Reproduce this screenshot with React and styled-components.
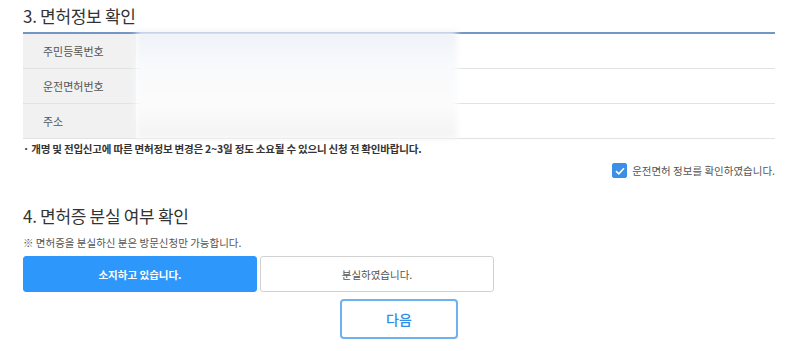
import React, { useState } from 'react'
import styled, { createGlobalStyle } from 'styled-components'

const GlobalStyle = createGlobalStyle`
  body {
    margin: 0;
    background: #fff;
    font-family: 'Noto Sans CJK KR', 'Noto Sans', sans-serif;
    color: #333;
  }
`

const Page = styled.div`
  width: 752px;
  padding: 4px 0 0 23px;
`

const SectionTitle = styled.h3`
  margin: ${(p) => p.$top || 0}px 0 0;
  font-size: 17px;
  font-weight: 400;
  line-height: 24px;
  color: #333;
  letter-spacing: -0.3px;
`

const TableWrap = styled.div`
  position: relative;
  margin-top: 4px;
  border-top: 2px solid #7496c4;
`

const Row = styled.div`
  display: grid;
  grid-template-columns: 113px 1fr;
  height: 34px;
  border-bottom: 1px solid #e2e2e2;
`

const Th = styled.div`
  display: flex;
  align-items: center;
  padding-left: 20px;
  background: #f1f1f1;
  font-size: 11px;
  color: #555;
`

const Td = styled.div`
  background: #fff;
`

const Blur = styled.div`
  position: absolute;
  left: 113px;
  top: -3px;
  width: 321px;
  bottom: 0;
  background: linear-gradient(180deg, #eef2f8 0%, #f9fafc 35%, #fbfbfb 70%, #f3f3f3 100%);
  filter: blur(3px);
`

const Notice = styled.p`
  margin: 3px 0 0;
  font-size: 10.5px;
  font-weight: 700;
  color: #333;
  line-height: 14px;
  letter-spacing: -0.2px;
`

const CheckRow = styled.label`
  display: flex;
  justify-content: flex-end;
  align-items: center;
  gap: 5px;
  margin-top: 7px;
  font-size: 10.5px;
  color: #555;
  cursor: pointer;
`

const Box = styled.span`
  display: inline-flex;
  align-items: center;
  justify-content: center;
  width: 15px;
  height: 15px;
  border-radius: 2px;
  background: ${(p) => (p.$on ? '#3c8fe6' : '#fff')};
  border: 1px solid ${(p) => (p.$on ? '#3c8fe6' : '#bbb')};
  box-sizing: border-box;
`

const Hint = styled.p`
  margin: 8px 0 0;
  font-size: 10.5px;
  color: #555;
  line-height: 14px;
`

const Choices = styled.div`
  display: flex;
  gap: 3px;
  margin-top: 6px;
`

const Choice = styled.button`
  width: 234px;
  height: 36px;
  border-radius: 3px;
  font-family: inherit;
  font-size: 10.5px;
  cursor: pointer;
  border: 1px solid ${(p) => (p.$active ? '#2e97fb' : '#d2d2d2')};
  background: ${(p) => (p.$active ? '#2e97fb' : '#fff')};
  color: ${(p) => (p.$active ? '#fff' : '#555')};
  font-weight: ${(p) => (p.$active ? 700 : 400)};
`

const Footer = styled.div`
  display: flex;
  justify-content: center;
  margin-top: 7px;
`

const NextButton = styled.button`
  width: 118px;
  height: 40px;
  border: 2px solid #6fb0ee;
  border-radius: 4px;
  background: #fff;
  color: #2f8ee8;
  font-family: inherit;
  font-size: 14px;
  font-weight: 500;
  cursor: pointer;
`

export default function App() {
  const [checked, setChecked] = useState(true)
  const [lost, setLost] = useState(false)

  return (
    <Page>
      <GlobalStyle />
      <SectionTitle>3. 면허정보 확인</SectionTitle>
      <TableWrap>
        <Row>
          <Th>주민등록번호</Th>
          <Td />
        </Row>
        <Row>
          <Th>운전면허번호</Th>
          <Td />
        </Row>
        <Row>
          <Th>주소</Th>
          <Td />
        </Row>
        <Blur />
      </TableWrap>
      <Notice>· 개명 및 전입신고에 따른 면허정보 변경은 2~3일 정도 소요될 수 있으니 신청 전 확인바랍니다.</Notice>
      <CheckRow onClick={() => setChecked(!checked)}>
        <Box $on={checked}>
          {checked && (
            <svg width="10" height="8" viewBox="0 0 10 8">
              <path d="M1 4.2 L3.8 6.8 L9 1.2" fill="none" stroke="#fff" strokeWidth="1.6" />
            </svg>
          )}
        </Box>
        운전면허 정보를 확인하였습니다.
      </CheckRow>
      <SectionTitle $top={26}>4. 면허증 분실 여부 확인</SectionTitle>
      <Hint>※ 면허증을 분실하신 분은 방문신청만 가능합니다.</Hint>
      <Choices>
        <Choice $active={!lost} onClick={() => setLost(false)}>소지하고 있습니다.</Choice>
        <Choice $active={lost} onClick={() => setLost(true)}>분실하였습니다.</Choice>
      </Choices>
      <Footer>
        <NextButton>다음</NextButton>
      </Footer>
    </Page>
  )
}
